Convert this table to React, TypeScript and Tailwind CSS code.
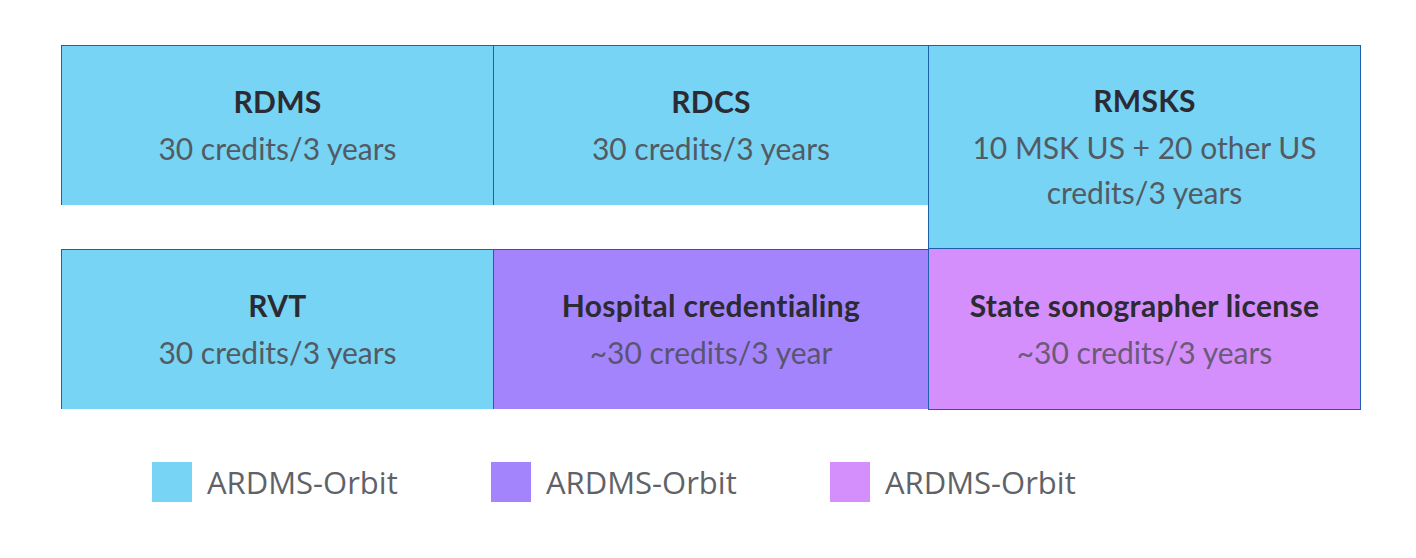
const font = { fontFamily: "Lato, 'Noto Sans', sans-serif" };

type Cell = {
  title: string;
  sub: React.ReactNode;
  cls: string;
};

const cells: Cell[] = [
  {
    title: "RDMS",
    sub: "30 credits/3 years",
    cls: "col-start-1 row-start-1 bg-[#77d4f4] text-[#525a63] border-t border-l border-r",
  },
  {
    title: "RDCS",
    sub: "30 credits/3 years",
    cls: "col-start-2 row-start-1 bg-[#77d4f4] text-[#525a63] border-t",
  },
  {
    title: "RMSKS",
    sub: (
      <>
        10 MSK US + 20 other US
        <br />
        credits/3 years
      </>
    ),
    cls: "col-start-3 row-start-1 row-span-2 bg-[#77d4f4] text-[#525a63] border",
  },
  {
    title: "RVT",
    sub: "30 credits/3 years",
    cls: "col-start-1 row-start-3 bg-[#77d4f4] text-[#525a63] border-t border-l border-r",
  },
  {
    title: "Hospital credentialing",
    sub: "~30 credits/3 year",
    cls: "col-start-2 row-start-3 bg-[#a384fd] text-[#5b5470] border-t",
  },
  {
    title: "State sonographer license",
    sub: "~30 credits/3 years",
    cls: "col-start-3 row-start-3 bg-[#d48ffc] text-[#6a5a78] border-l border-r border-b h-[161px]",
  },
];

const legend = ["bg-[#77d4f4]", "bg-[#a384fd]", "bg-[#d48ffc]"];

export default function App() {
  return (
    <div className="w-[1416px] h-[558px] bg-white pt-[45px] pl-[61px]" style={font}>
      <div className="grid grid-cols-[433px_434px_433px] grid-rows-[160px_44px_160px] w-[1300px]">
        {cells.map((c) => (
          <div
            key={c.title}
            className={`${c.cls} border-[#1d5fae] flex flex-col items-center justify-center text-center pb-1`}
          >
            <div className="text-[30px] leading-[50px] font-bold tracking-[0.3px] text-[#2c2b33]">
              {c.title}
            </div>
            <div className="text-[30px] leading-[45px] font-normal">{c.sub}</div>
          </div>
        ))}
      </div>

      <div className="flex mt-[50px] ml-[91px]">
        {legend.map((bg) => (
          <div key={bg} className="flex items-center w-[339px]">
            <div className={`w-10 h-10 ${bg}`} />
            <span
              className="ml-[15px] text-[31px] text-[#5f6368]"
              style={{ fontFamily: "'Open Sans', sans-serif" }}
            >
              ARDMS-Orbit
            </span>
          </div>
        ))}
      </div>
    </div>
  );
}
